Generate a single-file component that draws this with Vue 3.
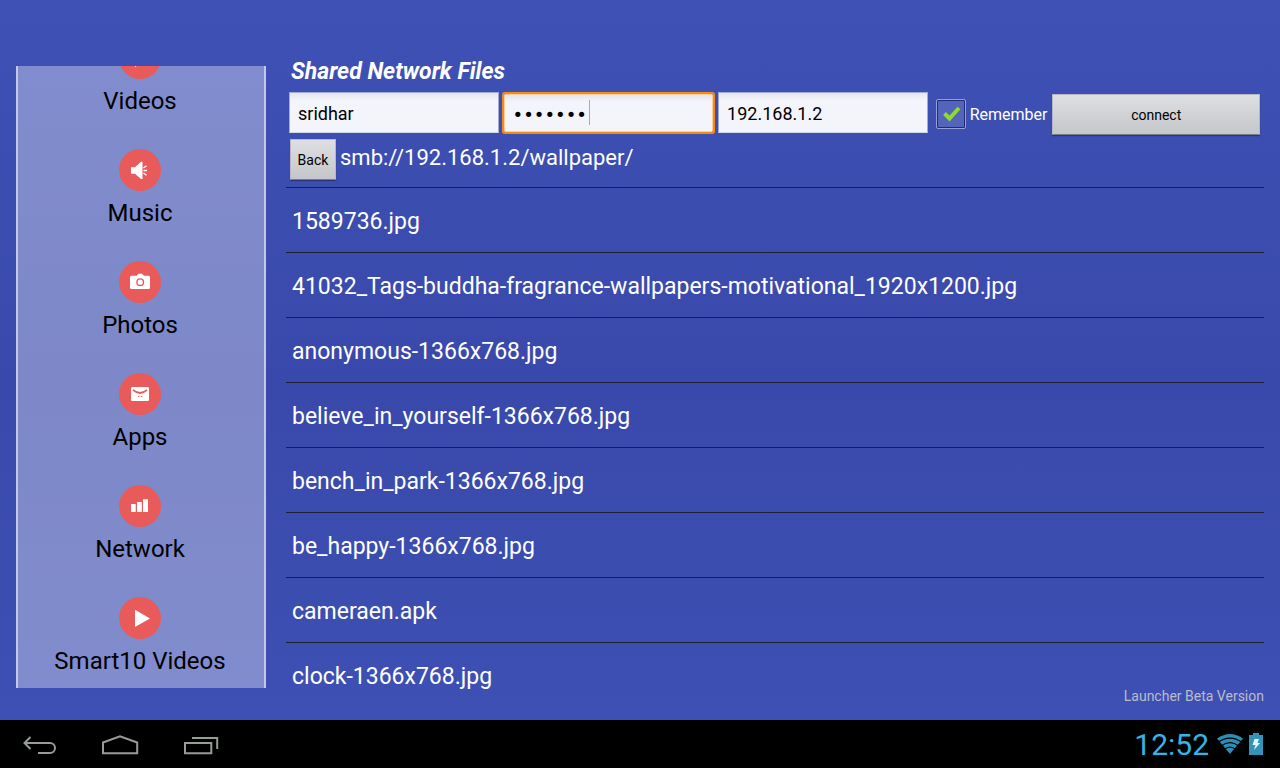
<script setup>
import { ref, computed } from 'vue';

defineOptions({
	name: 'NetworkBrowser'
});

const menu = [
	{ name: 'Videos', icon: 'play' },
	{ name: 'Music', icon: 'music' },
	{ name: 'Photos', icon: 'photo' },
	{ name: 'Apps', icon: 'mail' },
	{ name: 'Network', icon: 'bars' },
	{ name: 'Smart10 Videos', icon: 'play' }
];

const files = [
	'1589736.jpg',
	'41032_Tags-buddha-fragrance-wallpapers-motivational_1920x1200.jpg',
	'anonymous-1366x768.jpg',
	'believe_in_yourself-1366x768.jpg',
	'bench_in_park-1366x768.jpg',
	'be_happy-1366x768.jpg',
	'cameraen.apk',
	'clock-1366x768.jpg'
];

const user = ref('sridhar');
const password = ref('sridhar');
const host = ref('192.168.1.2');
const remember = ref(true);
const path = ref('smb://192.168.1.2/wallpaper/');

const DOT_WIDTH = 11;
const caretLeft = computed(() => `${8 + password.value.length * DOT_WIDTH}px`);
</script>

<template>

<div class="screen">
	<div class="launcher">
		<nav class="sidebar">
			<a v-for="item in menu" :key="item.name" href="#" class="menu-item">
				<svg class="menu-icon" viewBox="0 0 42 42" aria-hidden="true">
					<circle cx="21" cy="21" r="21" fill="#e95a5a" />
					<path v-if="item.icon === 'play'" d="M16 12.7L31 21.4L16 30Z" fill="#fff" />
					<g v-else-if="item.icon === 'music'">
						<path d="M12 18.2H16L22 12.7H23.5V30H22L16 24.8H12Z" fill="#fff" />
						<path d="M24.5 19L27.5 16.8M24.5 21.5H28M24.5 24L27.5 26.3" stroke="#fff" stroke-width="1.3" />
					</g>
					<g v-else-if="item.icon === 'photo'">
						<path d="M12.5 14.7H17.5L19.5 12.8H23L25 14.7H29.5Q31 14.7 31 16.2V26.5Q31 28 29.5 28H12.5Q11 28 11 26.5V16.2Q11 14.7 12.5 14.7Z" fill="#fff" />
						<circle cx="21.2" cy="21.2" r="3.3" fill="none" stroke="#e95a5a" stroke-width="1.4" />
					</g>
					<g v-else-if="item.icon === 'mail'">
						<rect x="12" y="14" width="18" height="14" rx="1.2" fill="#fff" />
						<path d="M14 16.8Q21 23.2 28 16.8" fill="none" stroke="#e95a5a" stroke-width="1.7" />
						<path d="M19 23.4H20.5M21.8 23.4H23.3" stroke="#e95a5a" stroke-width="1" />
					</g>
					<path v-else d="M12 19H16.7V27H12ZM18 17H22.8V27H18ZM24 14.3H29V27H24Z" fill="#fff" />
				</svg>
				<span class="menu-name">{{ item.name }}</span>
			</a>
		</nav>

		<main class="content">
			<h1 class="title">Shared Network Files</h1>

			<form class="login" @submit.prevent>
				<input v-model="user" class="field" type="text" aria-label="User name">
				<div class="password">
					<input v-model="password" class="field focused" type="password" aria-label="Password">
					<span class="caret" :style="{ left: caretLeft }"></span>
				</div>
				<input v-model="host" class="field" type="text" aria-label="Host">
				<div class="remember">
					<span class="check">
						<input id="remember" v-model="remember" type="checkbox">
						<svg v-show="remember" viewBox="0 0 30 30" aria-hidden="true">
							<path d="M8.5 14.5L13.5 19.5L23 9" fill="none" stroke="#8fdc26" stroke-width="4" />
						</svg>
					</span>
					<label for="remember">Remember</label>
				</div>
				<button class="btn connect" type="submit">connect</button>
			</form>

			<div class="location">
				<button class="btn back" type="button">Back</button>
				<span class="path">{{ path }}</span>
			</div>

			<ul class="files">
				<li v-for="file in files" :key="file">
					<a href="#">{{ file }}</a>
				</li>
			</ul>
		</main>
	</div>

	<div class="version">Launcher Beta Version</div>

	<footer class="system-bar">
		<button type="button" aria-label="Back">
			<svg viewBox="0 0 80 48">
				<path d="M30.5 17L24.5 23L30.5 29M25 23H50A5 5 0 0 1 50 33H38" />
			</svg>
		</button>
		<button type="button" aria-label="Home">
			<svg viewBox="0 0 80 48">
				<path d="M23 22.5L40 16.2L57.2 22.5V33.2H23Z" />
			</svg>
		</button>
		<button type="button" aria-label="Recent apps">
			<svg viewBox="0 0 80 48">
				<path d="M25 23H51.3V33.2H25ZM32 18H57.2V29" />
			</svg>
		</button>
		<div class="status">
			<span class="clock">12:52</span>
			<svg class="wifi" viewBox="0 0 26 20" aria-hidden="true">
				<path d="M0 4.5Q13 -4.5 26 4.5L13 20Z" fill="#2b8fb8" />
				<path d="M1 8.3Q13 -0.2 25 8.3M4 12.2Q13 5.2 22 12.2M7 15.6Q13 10.8 19 15.6" fill="none" stroke="#000" stroke-width="1.2" />
			</svg>
			<svg class="battery" viewBox="0 0 14 22" aria-hidden="true">
				<path d="M4 0H10V2H14V22H0V2H4Z" fill="#3294b8" />
				<path d="M5.5 6H10L8.5 10H11L5 17L6.5 12H3.5Z" fill="#e6f6fc" />
			</svg>
		</div>
	</footer>
</div>

</template>

<style>
body {
	margin: 0;
}
</style>

<style scoped>
.screen {
	display: flex;
	flex-direction: column;
	height: 100vh;
	overflow: hidden;
	background: linear-gradient(#3f51b5, #3949ab 50%, #3f51b5);
	font-family: Roboto, "Liberation Sans", sans-serif;
	color: #fff;
}

.screen * {
	box-sizing: border-box;
}

button,
input {
	font-family: inherit;
}

a {
	color: inherit;
	text-decoration: none;
}

.launcher {
	flex: 1;
	min-height: 0;
	display: flex;
	gap: 20px;
	padding: 57px 16px 0;
}

.sidebar {
	flex: none;
	display: flex;
	flex-direction: column;
	justify-content: flex-end;
	gap: 32px;
	width: 250px;
	margin-top: 9px;
	padding: 0 2px 11px 0;
	border: solid #c3c8e6;
	border-width: 0 2px;
	background-color: rgba(255, 255, 255, .35);
	overflow: hidden;
	color: #000;
}

.menu-item {
	flex: none;
	display: flex;
	flex-direction: column;
	align-items: center;
	gap: 6px;
}

.menu-icon {
	width: 42px;
	height: 42px;
}

.menu-name {
	font-size: 24px;
	line-height: 32px;
}

.content {
	flex: 1;
	min-width: 0;
	display: flex;
	flex-direction: column;
}

.title {
	margin: 0 0 5px;
	padding-left: 5px;
	font-size: 23px;
	font-style: italic;
	font-weight: 700;
	line-height: 30px;
}

.login {
	display: grid;
	grid-template-columns: 210fr 210fr 210fr auto 208fr;
	gap: 5px;
	padding: 0 4px 0 3px;
}

.field {
	width: 100%;
	min-width: 0;
	height: 41px;
	padding: 2px 8px 0;
	border: 1px solid #a3aad4;
	border-bottom-color: #d3d7ec;
	background: linear-gradient(#e4e6ed, #f4f5fb 20%);
	font-size: 18px;
	color: #000;
	outline: none;

	&.focused {
		display: block;
		height: 38px;
		border-color: #f9cf9d;
		box-shadow: 0 0 0 2px #f68b14;
		border-radius: 1px;
		font-family: "DejaVu Sans", sans-serif;
	}
}

.password {
	position: relative;
	padding-top: 2px;
}

.caret {
	position: absolute;
	top: 8px;
	width: 1px;
	height: 25px;
	background-color: #a9abb3;
}

.remember {
	display: flex;
	align-items: center;
	gap: 4px;
	height: 44px;
	padding-left: 3px;
	font-size: 16px;
}

.check {
	position: relative;
	width: 30px;
	height: 30px;

	input {
		appearance: none;
		display: block;
		width: 30px;
		height: 30px;
		margin: 0;
		border: 1px solid #97a0d4;
		border-radius: 2px;
		background-color: #5463bb;
		box-shadow: inset 0 0 0 1px #222c6c;
	}

	svg {
		position: absolute;
		inset: 0;
		pointer-events: none;
	}
}

.btn {
	height: 41px;
	padding: 0;
	border: 1px solid #b5b7c2;
	border-bottom-color: #777a8c;
	background: linear-gradient(#dedfe3, #c5c6ca);
	box-shadow: 0 1px 1px rgba(0, 0, 0, .3);
	font-size: 14px;
	color: #000;
}

.connect {
	margin-top: 2px;
}

.location {
	display: flex;
	gap: 4px;
	height: 51px;
	padding: 3px 4px 0;
}

.back {
	width: 46px;
}

.path {
	font-size: 22px;
	line-height: 38px;
}

.files {
	flex: 1;
	min-height: 0;
	margin: 0;
	padding: 0;
	list-style: none;

	li {
		border-top: 1px solid #1d2138;
	}

	a {
		display: block;
		height: 64px;
		padding: 0 6px;
		font-size: 23px;
		line-height: 68px;
		white-space: nowrap;
	}
}

.version {
	height: 32px;
	padding-right: 16px;
	font-size: 14px;
	line-height: 16px;
	text-align: right;
	color: #b9bccb;
}

.system-bar {
	flex: none;
	display: flex;
	height: 48px;
	background-color: #000;

	button {
		width: 80px;
		padding: 0;
		border: 0;
		background: none;
	}

	button svg {
		display: block;
		width: 80px;
		height: 48px;
		fill: none;
		stroke: #969c96;
		stroke-width: 2;
	}
}

.status {
	display: flex;
	align-items: center;
	margin-left: auto;
	padding-right: 17px;
}

.clock {
	margin-right: 8px;
	padding-top: 2px;
	font-size: 30px;
	line-height: 48px;
	color: #33b5e5;
}

.wifi {
	width: 26px;
	height: 20px;
	margin-right: 6px;
}

.battery {
	width: 14px;
	height: 22px;
}
</style>
